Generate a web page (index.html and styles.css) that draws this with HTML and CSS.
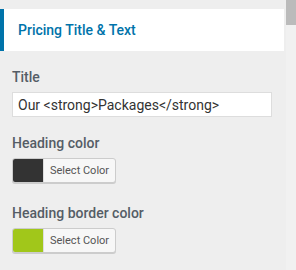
FILE: index.html
```html
<!DOCTYPE html>
<html lang="en">

<head>
    <meta charset="UTF-8">
    <title>Pricing Title &amp; Text</title>
    <link rel="stylesheet" href="styles.css">
</head>

<body>
    <div id="wrap">
        <div class="panel">
            <div class="panel-head">Pricing Title &amp; Text</div>

            <div class="field">
                <label class="field-label">Title</label>
                <input class="field-input" type="text" value="Our <strong>Packages</strong>">
            </div>

            <div class="field">
                <label class="field-label">Heading color</label>
                <button class="color-btn" type="button">
                    <span class="swatch swatch-dark"></span>
                    <span class="color-text">Select Color</span>
                </button>
            </div>

            <div class="field">
                <label class="field-label">Heading border color</label>
                <button class="color-btn" type="button">
                    <span class="swatch swatch-green"></span>
                    <span class="color-text">Select Color</span>
                </button>
            </div>
        </div>
        <div class="scrollbar">
            <div class="thumb"></div>
        </div>
    </div>
</body>

</html>
```

FILE: styles.css
```css
html,
body {
    margin: 0;
    height: 100%;
    background-color: #eeeeee;
    font-family: Roboto, "Liberation Sans", sans-serif;
}

#wrap {
    display: flex;
    height: 270px;
    gap: 2px;
}

.panel {
    width: 284px;
}

.panel-head {
    margin-top: 9px;
    height: 42px;
    box-sizing: border-box;
    padding-left: 14px;
    border-left: 4px solid #0073aa;
    background-color: #ffffff;
    color: #0073aa;
    font-size: 14px;
    font-weight: 500;
    line-height: 42px;
}

.field {
    padding: 0 12px;
    display: flex;
    flex-direction: column;
    align-items: flex-start;
}

.field-label {
    margin-top: 16px;
    margin-bottom: 5px;
    color: #555d66;
    font-size: 14px;
    font-weight: 500;
    line-height: 20px;
}

.field-input {
    width: 260px;
    height: 25px;
    box-sizing: border-box;
    margin: 0;
    padding: 0 5px;
    border: 1px solid #dddddd;
    background-color: #ffffff;
    color: #333333;
    font-family: Roboto, "Liberation Sans", sans-serif;
    font-size: 14px;
}

.color-btn {
    display: flex;
    align-items: stretch;
    height: 25px;
    margin: 0 0 4px;
    padding: 0;
    border: 1px solid #cccccc;
    border-radius: 3px;
    background-color: #f7f7f7;
    box-shadow: 0 1px 0 #cccccc;
    overflow: hidden;
}

.swatch {
    width: 30px;
}

.swatch-dark {
    background-color: #333333;
}

.swatch-green {
    background-color: #a1c71a;
}

.color-text {
    padding: 0 6px;
    border-left: 1px solid #dddddd;
    color: #555555;
    font-family: Roboto, "Liberation Sans", sans-serif;
    font-size: 11px;
    line-height: 23px;
}

.scrollbar {
    width: 10px;
    background-color: #f1f1f1;
}

.thumb {
    height: 25px;
    background-color: #bbbbbb;
}
```
